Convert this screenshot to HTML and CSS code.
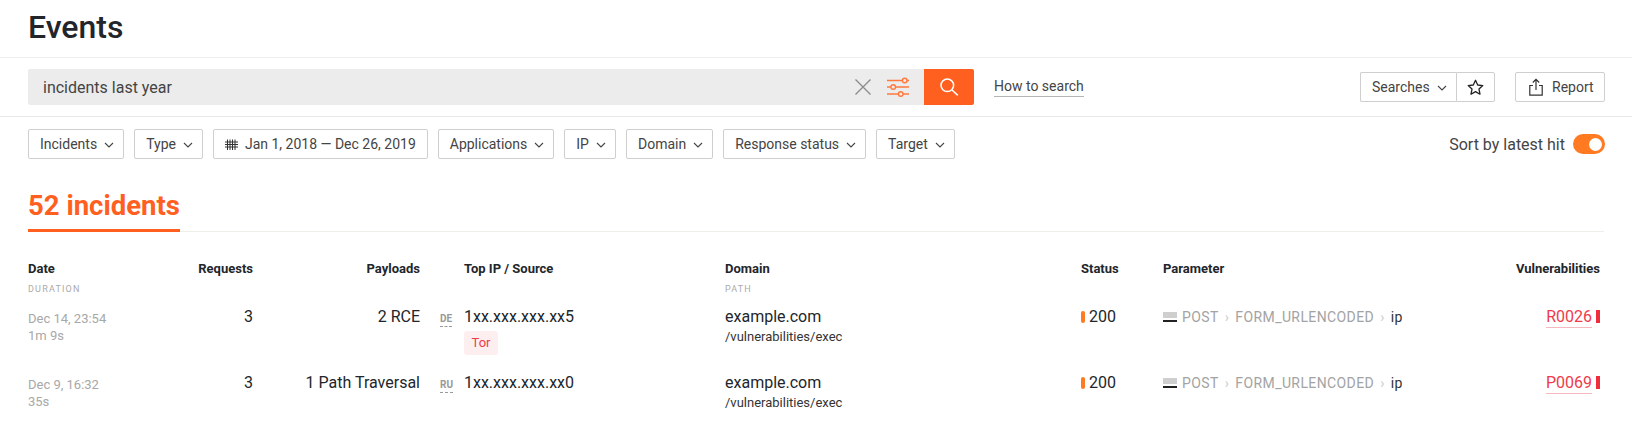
FILE: index.html
```html
<!DOCTYPE html>
<html lang="en">
<head>
    <meta charset="UTF-8">
    <meta name="viewport" content="width=device-width, initial-scale=1.0">
    <title>Events</title>
    <link rel="stylesheet" href="styles.css">
</head>
<body>

<header class="page-head">
    <h1>Events</h1>
</header>

<section class="search-bar">
    <div class="search-box">
        <span class="search-text">incidents last year</span>
        <svg class="icon-clear" width="18" height="18" viewBox="0 0 18 18"><path d="M1.500 1.500l15 15M16.500 1.500l-15 15" fill="none" stroke="#8c8c8c" stroke-width="1.400"/></svg>
        <svg class="icon-sliders" width="24" height="20" viewBox="0 0 24 20" fill="none" stroke="#ff7a3c" stroke-width="1.400"><path d="M1 3.500h15.500M21 3.500h2M1 10h4M9.500 10h13.500M1 17h11.500M17 17h6"/><circle cx="18.700" cy="3.500" r="2.300"/><circle cx="7.200" cy="10" r="2.300"/><circle cx="14.700" cy="17" r="2.300"/></svg>
    </div>
    <button class="search-btn">
        <svg width="20" height="20" viewBox="0 0 20 20" fill="none" stroke="#fff" stroke-width="1.500"><circle cx="8.300" cy="8.300" r="6.300"/><path d="M12.800 12.800l6 5.600"/></svg>
    </button>
    <a class="how-to" href="#">How to search</a>
    <div class="btn-group">
        <button class="btn">Searches <svg class="chev" width="10" height="6" viewBox="0 0 10 6"><path d="M1 1l4 4 4-4" fill="none" stroke="#444" stroke-width="1.100"/></svg></button>
        <button class="btn star-btn">
            <svg width="17" height="17" viewBox="0 0 17 17"><path d="M8.500 1.300l2.200 4.700 5.100.6-3.800 3.500 1 5.100-4.500-2.600-4.500 2.600 1-5.100-3.800-3.500 5.100-.6z" fill="none" stroke="#222" stroke-width="1.300" stroke-linejoin="round"/></svg>
        </button>
    </div>
    <button class="btn report-btn">
        <svg width="14" height="18" viewBox="0 0 14 18" fill="none" stroke="#333" stroke-width="1.200"><path d="M7 12V1.500M3.800 4.500L7 1.300l3.200 3.200M4 7.500H.8v9.700h12.400V7.500H10"/></svg>
        Report
    </button>
</section>

<section class="filters">
    <button class="btn">Incidents <svg class="chev" width="10" height="6" viewBox="0 0 10 6"><path d="M1 1l4 4 4-4" fill="none" stroke="#444" stroke-width="1.100"/></svg></button>
    <button class="btn">Type <svg class="chev" width="10" height="6" viewBox="0 0 10 6"><path d="M1 1l4 4 4-4" fill="none" stroke="#444" stroke-width="1.100"/></svg></button>
    <button class="btn date-btn">
        <svg width="13" height="12" viewBox="0 0 13 12" fill="none" stroke="#333"><path d="M0 4h13M0 6.500h13M0 9h13M2.500 1.500V12M5 1.500V12M7.500 1.500V12M10 1.500V12"/></svg>
        Jan 1, 2018 — Dec 26, 2019
    </button>
    <button class="btn">Applications <svg class="chev" width="10" height="6" viewBox="0 0 10 6"><path d="M1 1l4 4 4-4" fill="none" stroke="#444" stroke-width="1.100"/></svg></button>
    <button class="btn">IP <svg class="chev" width="10" height="6" viewBox="0 0 10 6"><path d="M1 1l4 4 4-4" fill="none" stroke="#444" stroke-width="1.100"/></svg></button>
    <button class="btn">Domain <svg class="chev" width="10" height="6" viewBox="0 0 10 6"><path d="M1 1l4 4 4-4" fill="none" stroke="#444" stroke-width="1.100"/></svg></button>
    <button class="btn">Response status <svg class="chev" width="10" height="6" viewBox="0 0 10 6"><path d="M1 1l4 4 4-4" fill="none" stroke="#444" stroke-width="1.100"/></svg></button>
    <button class="btn">Target <svg class="chev" width="10" height="6" viewBox="0 0 10 6"><path d="M1 1l4 4 4-4" fill="none" stroke="#444" stroke-width="1.100"/></svg></button>
    <label class="sort">Sort by latest hit <span class="toggle"></span></label>
</section>

<nav class="tabs">
    <a class="tab" href="#">52 incidents</a>
</nav>

<section class="events">
    <div class="row head-row">
        <div>Date<small>Duration</small></div>
        <div class="right">Requests</div>
        <div class="right">Payloads</div>
        <div></div>
        <div>Top IP / Source</div>
        <div>Domain<small>Path</small></div>
        <div>Status</div>
        <div>Parameter</div>
        <div class="right">Vulnerabilities</div>
    </div>

    <div class="row">
        <div class="date">Dec 14, 23:54<br>1m 9s</div>
        <div class="right">3</div>
        <div class="right">2 RCE</div>
        <div><span class="flag">DE</span></div>
        <div>1xx.xxx.xxx.xx5<span class="tag">Tor</span></div>
        <div>example.com<span class="path">/vulnerabilities/exec</span></div>
        <div class="status">200</div>
        <div class="param"><span class="post-icon"></span>POST<i>›</i>FORM_URLENCODED<i>›</i><b>ip</b></div>
        <div class="right"><a class="vuln" href="#">R0026</a></div>
    </div>

    <div class="row">
        <div class="date">Dec 9, 16:32<br>35s</div>
        <div class="right">3</div>
        <div class="right">1 Path Traversal</div>
        <div><span class="flag">RU</span></div>
        <div>1xx.xxx.xxx.xx0</div>
        <div>example.com<span class="path">/vulnerabilities/exec</span></div>
        <div class="status">200</div>
        <div class="param"><span class="post-icon"></span>POST<i>›</i>FORM_URLENCODED<i>›</i><b>ip</b></div>
        <div class="right"><a class="vuln" href="#">P0069</a></div>
    </div>
</section>

</body>
</html>
```

FILE: styles.css
```css
* {
    box-sizing: border-box;
}

body {
    margin: 0;
    font-family: Roboto, "Liberation Sans", sans-serif;
    color: #22262b;
    background-color: #fff;
    overflow: hidden;
}

button {
    font-family: inherit;
}

a {
    text-decoration: none;
}

svg {
    flex: none;
}

.page-head {
    height: 58px;
    padding: 8px 28px 0;
    border-bottom: 1px solid #efefef;
}

h1 {
    margin: 0;
    font-size: 32px;
    line-height: 38px;
    font-weight: 500;
}

.search-bar {
    height: 59px;
    padding: 11px 27px 0 28px;
    border-bottom: 1px solid #e9e9e9;
    display: flex;
    align-items: flex-start;
}

.search-box {
    width: 896px;
    height: 36px;
    background-color: #ececec;
    border-radius: 2px 0 0 2px;
    padding: 0 14px 0 15px;
    display: flex;
    align-items: center;
    font-size: 16px;
    color: #444;
}

.search-text {
    flex: 1;
}

.icon-sliders {
    margin-left: 14px;
}

.search-btn {
    width: 50px;
    height: 36px;
    border: none;
    border-radius: 0 2px 2px 0;
    background-color: #ff5f1f;
    display: flex;
    align-items: center;
    justify-content: center;
    padding: 0;
}

.how-to {
    margin: 8px 0 0 20px;
    height: 20px;
    line-height: 18px;
    font-size: 14px;
    color: #444;
    border-bottom: 1px solid #b5b5b5;
}

.btn {
    height: 30px;
    padding: 0 9px 0 11px;
    background-color: #fff;
    border: 1px solid #cfcfcf;
    border-radius: 2px;
    font-size: 14px;
    color: #444;
    display: flex;
    align-items: center;
    white-space: nowrap;
}

.chev {
    margin-left: 7px;
    margin-top: 2px;
}

.btn-group {
    margin: 3px 0 0 auto;
    display: flex;
}

.btn-group .btn:first-child {
    width: 96px;
    border-right: none;
    border-radius: 2px 0 0 2px;
}

.star-btn {
    width: 39px;
    justify-content: center;
    padding: 0;
    border-radius: 0 2px 2px 0;
}

.report-btn {
    margin: 3px 0 0 20px;
    width: 90px;
    gap: 9px;
    padding: 0 13px;
}

.filters {
    padding: 12px 27px 0 28px;
    display: flex;
    align-items: center;
    gap: 10px;
}

.date-btn {
    gap: 7px;
    padding-right: 11px;
}

.sort {
    margin-left: auto;
    font-size: 16px;
    color: #444;
    display: flex;
    align-items: center;
    gap: 8px;
}

.toggle {
    width: 32px;
    height: 20px;
    border-radius: 10px;
    background-color: #ff7a20;
    display: flex;
    justify-content: flex-end;
    align-items: center;
    padding-right: 3px;
}

.toggle::after {
    content: "";
    width: 13px;
    height: 13px;
    border-radius: 50%;
    background-color: #fff;
}

.tabs {
    margin: 29px 28px 0;
    height: 44px;
    border-bottom: 1px solid #efefe9;
}

.tab {
    display: inline-block;
    height: 44px;
    font-size: 27.500px;
    line-height: 36px;
    font-weight: 700;
    color: #ff5f1f;
    border-bottom: 3px solid #ff5f1f;
}

.events {
    padding: 0 32px 0 28px;
}

.row {
    display: grid;
    grid-template-columns: 145px 80px 167px 44px 261px 356px 82px 1fr auto;
    height: 66px;
    padding-top: 11px;
    font-size: 16px;
    line-height: 22px;
}

.head-row {
    height: 63px;
    padding-top: 27px;
    font-size: 13px;
    line-height: 20px;
    font-weight: 700;
}

.head-row small {
    display: block;
    font-size: 9px;
    line-height: 20px;
    font-weight: 400;
    letter-spacing: 1.200px;
    text-transform: uppercase;
    color: #aaa;
}

.right {
    text-align: right;
}

.date {
    font-size: 13px;
    line-height: 17px;
    padding-top: 4px;
    color: #a8a8a8;
}

.flag {
    display: inline-block;
    margin-left: 20px;
    height: 15px;
    margin-top: 5px;
    font-size: 10px;
    line-height: 13px;
    font-weight: 700;
    color: #999;
    border-bottom: 1px dashed #999;
}

.tag {
    display: block;
    width: 34px;
    height: 24px;
    margin-top: 3px;
    border-radius: 3px;
    background-color: #fdeef0;
    color: #ef3b4a;
    font-size: 13px;
    line-height: 24px;
    text-align: center;
}

.path {
    display: block;
    font-size: 13px;
    line-height: 17px;
    color: #333;
}

.status {
    display: flex;
    align-items: flex-start;
}

.status::before {
    content: "";
    width: 4px;
    height: 12px;
    margin: 5px 4px 0 0;
    border-radius: 2px;
    background-color: #ff7a20;
}

.param {
    display: flex;
    align-items: center;
    align-self: start;
    height: 22px;
    font-size: 14px;
    letter-spacing: 0.400px;
    color: #a3a3a3;
}

.param i {
    font-style: normal;
    margin: 0 6px;
    color: #ccc;
}

.param b {
    font-weight: 400;
    color: #333;
}

.post-icon {
    width: 14px;
    height: 10px;
    margin-right: 5px;
    background-color: #cfcfcf;
    border-bottom: 2px solid #222;
    box-shadow: inset 0 -2px 0 #fff;
}

.vuln {
    display: inline-block;
    color: #ef3b4a;
    border-bottom: 1px solid #f5b8bf;
    line-height: 22px;
    height: 22px;
    position: relative;
    margin-right: 8px;
}

.vuln::after {
    content: "";
    position: absolute;
    right: -8px;
    top: 4px;
    width: 4px;
    height: 13px;
    background-color: #ef2d3d;
}
```
